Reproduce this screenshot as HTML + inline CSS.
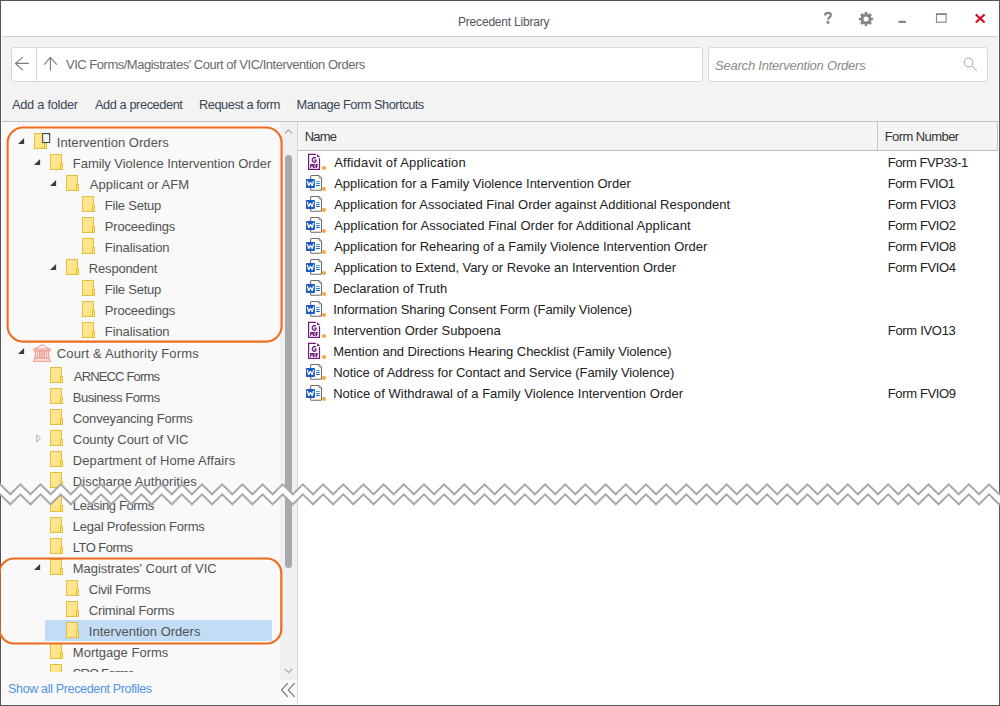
<!DOCTYPE html>
<html><head><meta charset="utf-8"><title>Precedent Library</title>
<style>
*{margin:0;padding:0;box-sizing:border-box}
html,body{width:1000px;height:706px;overflow:hidden;background:#f3f3f3;font-family:"Liberation Sans",sans-serif;position:relative}
.a{position:absolute;display:block}
.t{position:absolute;white-space:nowrap;line-height:20px;height:20px}
</style></head><body>

<div class="a" style="left:0;top:0;width:1000px;height:37px;background:#fff;border-bottom:1px solid #cdcdcd"></div>
<svg class="a" style="left:815px;top:5px" width="180" height="25" viewBox="815 5 180 25">
<path d="M825.1 15.4 L825.1 14.6 Q825.6 12.9 828.1 12.9 Q830.9 12.9 830.9 15 Q830.9 16.4 829.5 17.3 Q828 18.3 828 19.8" fill="none" stroke="#828282" stroke-width="2.1"/><rect x="826.6" y="21.1" width="2.8" height="2.7" rx="0.8" fill="#828282"/>
<g transform="translate(866 19)" fill="#858585">
<circle r="5.4"/>
<rect x="-1.25" y="-7.1" width="2.5" height="14.2"/><rect x="-7.1" y="-1.25" width="14.2" height="2.5"/>
<rect x="-1.5" y="-6.9" width="3" height="13.8" transform="rotate(45)"/><rect x="-6.9" y="-1.5" width="13.8" height="3" transform="rotate(45)"/>
<circle r="2.5" fill="#fff"/>
</g>
<rect x="898.5" y="20.8" width="7.5" height="2.1" fill="#808080"/>
<rect x="936.5" y="14" width="9.6" height="8.2" fill="none" stroke="#8a8a8a" stroke-width="1.15"/>
<rect x="936" y="13.4" width="10.6" height="1.6" fill="#858585"/>
<path d="M975.8 14.6 L984.6 22.6 M984.6 14.6 L975.8 22.6" stroke="#d2051e" stroke-width="2" fill="none"/>
</svg>
<div class="a" style="left:11px;top:47px;width:692px;height:35px;background:#fff;border:1px solid #d7d7d7;border-radius:3px"></div>
<div class="a" style="left:36px;top:48px;width:1px;height:33px;background:#d7d7d7"></div>
<svg class="a" style="left:11px;top:47px" width="60" height="35" viewBox="11 47 60 35">
<path d="M15.4 63.4 L28.8 63.4 M22.8 57.2 L15.4 63.4 L22.8 70.2" fill="none" stroke="#7a7a7a" stroke-width="1.1"/>
<path d="M50.4 57.4 L50.4 70.8 M44.2 64.6 L50.4 57.4 L56.8 64.6" fill="none" stroke="#7a7a7a" stroke-width="1.1"/>
</svg>
<div class="a" style="left:708px;top:47px;width:280px;height:35px;background:#fff;border:1px solid #d7d7d7;border-radius:3px"></div>
<svg class="a" style="left:958px;top:52px" width="25" height="25" viewBox="958 52 25 25">
<circle cx="968.6" cy="62.5" r="4.4" fill="none" stroke="#a2a2a2" stroke-width="1"/>
<path d="M971.7 65.7 L976.9 70.9" stroke="#a2a2a2" stroke-width="1"/>
</svg>
<div class="a" style="left:0;top:121px;width:1000px;height:1px;background:#c2c2c2"></div>
<div class="a" style="left:1px;top:122px;width:296px;height:583px;background:#f9f9f9"></div>
<div class="a" style="left:280px;top:122px;width:17px;height:558px;background:#f0f0f0"></div>
<div class="a" style="left:285px;top:155px;width:7px;height:413px;background:#a9a9a9;border-radius:3.5px"></div>
<svg class="a" style="left:280px;top:122px" width="17" height="558" viewBox="280 122 17 558">
<path d="M284.8 133.6 L288.5 129.8 L292.2 133.6" fill="none" stroke="#a2a2a2" stroke-width="1.1"/>
<path d="M284.8 669 L288.5 672.6 L292.2 669" fill="none" stroke="#a2a2a2" stroke-width="1.1"/>
</svg>
<div class="a" style="left:297px;top:122px;width:1px;height:583px;background:#d6d6d6"></div>
<div class="a" style="left:298px;top:122px;width:701px;height:583px;background:#fff"></div>
<div class="a" style="left:298px;top:122px;width:700px;height:29px;background:#f4f4f4;border-bottom:1px solid #bcbcbc;border-right:1px solid #c4c4c4"></div>
<div class="a" style="left:877px;top:122px;width:1px;height:28px;background:#c8c8c8"></div>
<svg width="0" height="0" style="position:absolute"><defs><linearGradient id="fg" x1="0" y1="0" x2="1" y2="1"><stop offset="0" stop-color="#fee79a"/><stop offset="1" stop-color="#fde27e"/></linearGradient></defs></svg>
<div class="a" style="left:1px;top:122px;width:279px;height:550px;overflow:hidden">
<div class="a" style="left:-1px;top:-122px;width:1000px;height:800px">
<div class="a" style="left:45px;top:620px;width:227px;height:21px;background:#c3dcf5"></div>
<svg class="a" style="left:34px;top:133px" width="14" height="17" viewBox="0 0 14 17"><rect x="0.5" y="0.5" width="11" height="15" fill="url(#fg)" stroke="#e5bf3c"/><rect x="10.5" y="9.5" width="2" height="6" fill="#fde58a" stroke="#e5bf3c"/></svg>
<svg class="a" style="left:42px;top:133px" width="9" height="11" viewBox="0 0 9 11"><rect x="0.65" y="0.55" width="7" height="9" fill="#f6f6f6" stroke="#454545" stroke-width="1.05"/><path d="M5.4 0.1 L8.1 0.1 L8.1 2.8 Z" fill="#454545"/></svg>
<svg class="a" style="left:18px;top:138px" width="7" height="7" viewBox="0 0 7 7"><path d="M0 6 L6.1 0 L6.1 6 Z" fill="#3c3c3c"/></svg>
<div class="t" style="left:56.80px;top:133px;font-size:13px;color:#525252;letter-spacing:0.039px;">Intervention Orders</div>
<svg class="a" style="left:50px;top:154px" width="14" height="17" viewBox="0 0 14 17"><rect x="0.5" y="0.5" width="11" height="15" fill="url(#fg)" stroke="#e5bf3c"/><rect x="10.5" y="9.5" width="2" height="6" fill="#fde58a" stroke="#e5bf3c"/></svg>
<svg class="a" style="left:34px;top:159px" width="7" height="7" viewBox="0 0 7 7"><path d="M0 6 L6.1 0 L6.1 6 Z" fill="#3c3c3c"/></svg>
<div class="t" style="left:72.80px;top:154px;font-size:13px;color:#525252;letter-spacing:-0.045px;">Family Violence Intervention Order</div>
<svg class="a" style="left:66px;top:175px" width="14" height="17" viewBox="0 0 14 17"><rect x="0.5" y="0.5" width="11" height="15" fill="url(#fg)" stroke="#e5bf3c"/><rect x="10.5" y="9.5" width="2" height="6" fill="#fde58a" stroke="#e5bf3c"/></svg>
<svg class="a" style="left:50px;top:180px" width="7" height="7" viewBox="0 0 7 7"><path d="M0 6 L6.1 0 L6.1 6 Z" fill="#3c3c3c"/></svg>
<div class="t" style="left:89.80px;top:175px;font-size:13px;color:#525252;letter-spacing:0.013px;">Applicant or AFM</div>
<svg class="a" style="left:82px;top:196px" width="14" height="17" viewBox="0 0 14 17"><rect x="0.5" y="0.5" width="11" height="15" fill="url(#fg)" stroke="#e5bf3c"/><rect x="10.5" y="9.5" width="2" height="6" fill="#fde58a" stroke="#e5bf3c"/></svg>
<div class="t" style="left:104.80px;top:196px;font-size:13px;color:#525252;letter-spacing:-0.233px;">File Setup</div>
<svg class="a" style="left:82px;top:217px" width="14" height="17" viewBox="0 0 14 17"><rect x="0.5" y="0.5" width="11" height="15" fill="url(#fg)" stroke="#e5bf3c"/><rect x="10.5" y="9.5" width="2" height="6" fill="#fde58a" stroke="#e5bf3c"/></svg>
<div class="t" style="left:104.80px;top:217px;font-size:13px;color:#525252;letter-spacing:-0.180px;">Proceedings</div>
<svg class="a" style="left:82px;top:238px" width="14" height="17" viewBox="0 0 14 17"><rect x="0.5" y="0.5" width="11" height="15" fill="url(#fg)" stroke="#e5bf3c"/><rect x="10.5" y="9.5" width="2" height="6" fill="#fde58a" stroke="#e5bf3c"/></svg>
<div class="t" style="left:104.80px;top:238px;font-size:13px;color:#525252;letter-spacing:-0.091px;">Finalisation</div>
<svg class="a" style="left:66px;top:259px" width="14" height="17" viewBox="0 0 14 17"><rect x="0.5" y="0.5" width="11" height="15" fill="url(#fg)" stroke="#e5bf3c"/><rect x="10.5" y="9.5" width="2" height="6" fill="#fde58a" stroke="#e5bf3c"/></svg>
<svg class="a" style="left:50px;top:264px" width="7" height="7" viewBox="0 0 7 7"><path d="M0 6 L6.1 0 L6.1 6 Z" fill="#3c3c3c"/></svg>
<div class="t" style="left:88.80px;top:259px;font-size:13px;color:#525252;letter-spacing:-0.167px;">Respondent</div>
<svg class="a" style="left:82px;top:280px" width="14" height="17" viewBox="0 0 14 17"><rect x="0.5" y="0.5" width="11" height="15" fill="url(#fg)" stroke="#e5bf3c"/><rect x="10.5" y="9.5" width="2" height="6" fill="#fde58a" stroke="#e5bf3c"/></svg>
<div class="t" style="left:104.80px;top:280px;font-size:13px;color:#525252;letter-spacing:-0.233px;">File Setup</div>
<svg class="a" style="left:82px;top:301px" width="14" height="17" viewBox="0 0 14 17"><rect x="0.5" y="0.5" width="11" height="15" fill="url(#fg)" stroke="#e5bf3c"/><rect x="10.5" y="9.5" width="2" height="6" fill="#fde58a" stroke="#e5bf3c"/></svg>
<div class="t" style="left:104.80px;top:301px;font-size:13px;color:#525252;letter-spacing:-0.180px;">Proceedings</div>
<svg class="a" style="left:82px;top:322px" width="14" height="17" viewBox="0 0 14 17"><rect x="0.5" y="0.5" width="11" height="15" fill="url(#fg)" stroke="#e5bf3c"/><rect x="10.5" y="9.5" width="2" height="6" fill="#fde58a" stroke="#e5bf3c"/></svg>
<div class="t" style="left:104.80px;top:322px;font-size:13px;color:#525252;letter-spacing:-0.091px;">Finalisation</div>
<svg class="a" style="left:33px;top:344px" width="19" height="19" viewBox="0 0 19 19">
<g fill="#f9ddd8" stroke="#f0978a" stroke-width="1">
<path d="M0.9 5.6 L9 0.6 L17.1 5.6" fill="none"/>
<rect x="0.9" y="4.9" width="16.2" height="2"/>
<rect x="2.3" y="6.9" width="2.4" height="7.2"/>
<rect x="6.6" y="6.9" width="4.8" height="7.2" fill="#f4b8ae"/>
<rect x="13.3" y="6.9" width="2.4" height="7.2"/>
<path d="M1.6 14.2 L16.4 14.2 L17.5 17.4 L0.5 17.4 Z"/>
</g>
</svg>
<svg class="a" style="left:18px;top:348px" width="7" height="7" viewBox="0 0 7 7"><path d="M0 6 L6.1 0 L6.1 6 Z" fill="#3c3c3c"/></svg>
<div class="t" style="left:56.80px;top:344px;font-size:13px;color:#525252;letter-spacing:0.145px;">Court &amp; Authority Forms</div>
<svg class="a" style="left:50px;top:367px" width="14" height="17" viewBox="0 0 14 17"><rect x="0.5" y="0.5" width="11" height="15" fill="url(#fg)" stroke="#e5bf3c"/><rect x="10.5" y="9.5" width="2" height="6" fill="#fde58a" stroke="#e5bf3c"/></svg>
<div class="t" style="left:73.80px;top:367px;font-size:13px;color:#525252;letter-spacing:-0.836px;">ARNECC Forms</div>
<svg class="a" style="left:50px;top:388px" width="14" height="17" viewBox="0 0 14 17"><rect x="0.5" y="0.5" width="11" height="15" fill="url(#fg)" stroke="#e5bf3c"/><rect x="10.5" y="9.5" width="2" height="6" fill="#fde58a" stroke="#e5bf3c"/></svg>
<div class="t" style="left:72.80px;top:388px;font-size:13px;color:#525252;letter-spacing:-0.446px;">Business Forms</div>
<svg class="a" style="left:50px;top:409px" width="14" height="17" viewBox="0 0 14 17"><rect x="0.5" y="0.5" width="11" height="15" fill="url(#fg)" stroke="#e5bf3c"/><rect x="10.5" y="9.5" width="2" height="6" fill="#fde58a" stroke="#e5bf3c"/></svg>
<div class="t" style="left:72.80px;top:409px;font-size:13px;color:#525252;letter-spacing:-0.165px;">Conveyancing Forms</div>
<svg class="a" style="left:50px;top:430px" width="14" height="17" viewBox="0 0 14 17"><rect x="0.5" y="0.5" width="11" height="15" fill="url(#fg)" stroke="#e5bf3c"/><rect x="10.5" y="9.5" width="2" height="6" fill="#fde58a" stroke="#e5bf3c"/></svg>
<svg class="a" style="left:36px;top:434px" width="7" height="9" viewBox="0 0 7 9"><path d="M0.8 0.8 L4.6 4.3 L0.8 7.7 Z" fill="none" stroke="#ababab" stroke-width="1"/></svg>
<div class="t" style="left:72.80px;top:430px;font-size:13px;color:#525252;letter-spacing:-0.044px;">County Court of VIC</div>
<svg class="a" style="left:50px;top:451px" width="14" height="17" viewBox="0 0 14 17"><rect x="0.5" y="0.5" width="11" height="15" fill="url(#fg)" stroke="#e5bf3c"/><rect x="10.5" y="9.5" width="2" height="6" fill="#fde58a" stroke="#e5bf3c"/></svg>
<div class="t" style="left:72.80px;top:451px;font-size:13px;color:#525252;letter-spacing:0.088px;">Department of Home Affairs</div>
<svg class="a" style="left:50px;top:472px" width="14" height="17" viewBox="0 0 14 17"><rect x="0.5" y="0.5" width="11" height="15" fill="url(#fg)" stroke="#e5bf3c"/><rect x="10.5" y="9.5" width="2" height="6" fill="#fde58a" stroke="#e5bf3c"/></svg>
<div class="t" style="left:72.80px;top:472px;font-size:13px;color:#525252;letter-spacing:0.055px;">Discharge Authorities</div>
<svg class="a" style="left:50px;top:496px" width="14" height="17" viewBox="0 0 14 17"><rect x="0.5" y="0.5" width="11" height="15" fill="url(#fg)" stroke="#e5bf3c"/><rect x="10.5" y="9.5" width="2" height="6" fill="#fde58a" stroke="#e5bf3c"/></svg>
<div class="t" style="left:72.80px;top:496px;font-size:13px;color:#525252;letter-spacing:-0.375px;">Leasing Forms</div>
<svg class="a" style="left:50px;top:517px" width="14" height="17" viewBox="0 0 14 17"><rect x="0.5" y="0.5" width="11" height="15" fill="url(#fg)" stroke="#e5bf3c"/><rect x="10.5" y="9.5" width="2" height="6" fill="#fde58a" stroke="#e5bf3c"/></svg>
<div class="t" style="left:72.80px;top:517px;font-size:13px;color:#525252;letter-spacing:-0.248px;">Legal Profession Forms</div>
<svg class="a" style="left:50px;top:538px" width="14" height="17" viewBox="0 0 14 17"><rect x="0.5" y="0.5" width="11" height="15" fill="url(#fg)" stroke="#e5bf3c"/><rect x="10.5" y="9.5" width="2" height="6" fill="#fde58a" stroke="#e5bf3c"/></svg>
<div class="t" style="left:72.80px;top:538px;font-size:13px;color:#525252;letter-spacing:-0.537px;">LTO Forms</div>
<svg class="a" style="left:50px;top:559px" width="14" height="17" viewBox="0 0 14 17"><rect x="0.5" y="0.5" width="11" height="15" fill="url(#fg)" stroke="#e5bf3c"/><rect x="10.5" y="9.5" width="2" height="6" fill="#fde58a" stroke="#e5bf3c"/></svg>
<svg class="a" style="left:34px;top:564px" width="7" height="7" viewBox="0 0 7 7"><path d="M0 6 L6.1 0 L6.1 6 Z" fill="#3c3c3c"/></svg>
<div class="t" style="left:72.80px;top:559px;font-size:13px;color:#525252;letter-spacing:-0.042px;">Magistrates&#x27; Court of VIC</div>
<svg class="a" style="left:66px;top:580px" width="14" height="17" viewBox="0 0 14 17"><rect x="0.5" y="0.5" width="11" height="15" fill="url(#fg)" stroke="#e5bf3c"/><rect x="10.5" y="9.5" width="2" height="6" fill="#fde58a" stroke="#e5bf3c"/></svg>
<div class="t" style="left:88.80px;top:580px;font-size:13px;color:#525252;letter-spacing:-0.300px;">Civil Forms</div>
<svg class="a" style="left:66px;top:601px" width="14" height="17" viewBox="0 0 14 17"><rect x="0.5" y="0.5" width="11" height="15" fill="url(#fg)" stroke="#e5bf3c"/><rect x="10.5" y="9.5" width="2" height="6" fill="#fde58a" stroke="#e5bf3c"/></svg>
<div class="t" style="left:88.80px;top:601px;font-size:13px;color:#525252;letter-spacing:-0.177px;">Criminal Forms</div>
<svg class="a" style="left:66px;top:622px" width="14" height="17" viewBox="0 0 14 17"><rect x="0.5" y="0.5" width="11" height="15" fill="url(#fg)" stroke="#e5bf3c"/><rect x="10.5" y="9.5" width="2" height="6" fill="#fde58a" stroke="#e5bf3c"/></svg>
<div class="t" style="left:88.80px;top:622px;font-size:13px;color:#525252;letter-spacing:0.022px;">Intervention Orders</div>
<svg class="a" style="left:50px;top:643px" width="14" height="17" viewBox="0 0 14 17"><rect x="0.5" y="0.5" width="11" height="15" fill="url(#fg)" stroke="#e5bf3c"/><rect x="10.5" y="9.5" width="2" height="6" fill="#fde58a" stroke="#e5bf3c"/></svg>
<div class="t" style="left:72.80px;top:643px;font-size:13px;color:#525252;letter-spacing:0.015px;">Mortgage Forms</div>
<svg class="a" style="left:50px;top:664px" width="14" height="17" viewBox="0 0 14 17"><rect x="0.5" y="0.5" width="11" height="15" fill="url(#fg)" stroke="#e5bf3c"/><rect x="10.5" y="9.5" width="2" height="6" fill="#fde58a" stroke="#e5bf3c"/></svg>
<div class="t" style="left:72.80px;top:664px;font-size:13px;color:#525252;letter-spacing:-0.875px;">SRO Forms</div>
</div></div>
<svg class="a" style="left:306px;top:153px" width="22" height="19" viewBox="0 0 22 19">
<path d="M9.9 1.3 L2.6 1.3 L2.6 16.4 L13.5 16.4 L13.5 5" fill="none" stroke="#6b1b7d" stroke-width="1.2"/>
<path d="M11.1 1 L11.1 3.9 L14.1 3.9 Z" fill="#6b1b7d"/>
<path d="M9.9 5.1 A2.3 2.3 0 1 0 9.9 8.8 L9.9 7.2 L8.3 7.2" fill="none" stroke="#6b1b7d" stroke-width="1.3"/>
<path d="M4.6 15 L4.6 11.5 L6.3 11.5 L6.3 13 L4.6 13 M7.4 11.5 L8.1 11.5 Q9.2 11.5 9.2 13.1 Q9.2 14.5 8.1 14.5 L7.4 14.5 Z M10.4 15 L10.4 11.5 L12 11.5 M10.4 13.1 L11.7 13.1" fill="none" stroke="#6b1b7d" stroke-width="1.05"/>
<circle cx="18" cy="14.9" r="2" fill="#f7a53a"/>
</svg>
<svg class="a" style="left:306px;top:174px" width="22" height="19" viewBox="0 0 22 19">
<path d="M4.6 2.6 Q4.6 1.5 5.6 1.5 L12.7 1.5 L15.5 4.3 L15.5 15.3 Q15.5 16.3 14.5 16.3 L5.6 16.3 Q4.6 16.3 4.6 15.3 Z" fill="#fff" stroke="#6e6e6e" stroke-width="1.1"/>
<path d="M12.9 2.2 L12.9 3.9 L14.8 3.9" fill="none" stroke="#9a9a9a" stroke-width="0.8"/>
<rect x="0" y="5" width="8.9" height="8.9" rx="0.6" fill="#1d5cc5"/>
<path d="M1.3 6.9 L2.7 11.7 L4.45 8.3 L6.2 11.7 L7.6 6.9" fill="none" stroke="#fff" stroke-width="1.25" stroke-linejoin="bevel"/>
<rect x="10" y="6.9" width="3.9" height="1.05" rx="0.5" fill="#3aa0ee"/><rect x="10" y="9" width="3.9" height="1.05" rx="0.5" fill="#1b78d6"/><rect x="10" y="11" width="3.9" height="1.05" rx="0.5" fill="#1456bf"/>
<circle cx="18" cy="14.9" r="2" fill="#f7a53a"/>
</svg>
<svg class="a" style="left:306px;top:195px" width="22" height="19" viewBox="0 0 22 19">
<path d="M4.6 2.6 Q4.6 1.5 5.6 1.5 L12.7 1.5 L15.5 4.3 L15.5 15.3 Q15.5 16.3 14.5 16.3 L5.6 16.3 Q4.6 16.3 4.6 15.3 Z" fill="#fff" stroke="#6e6e6e" stroke-width="1.1"/>
<path d="M12.9 2.2 L12.9 3.9 L14.8 3.9" fill="none" stroke="#9a9a9a" stroke-width="0.8"/>
<rect x="0" y="5" width="8.9" height="8.9" rx="0.6" fill="#1d5cc5"/>
<path d="M1.3 6.9 L2.7 11.7 L4.45 8.3 L6.2 11.7 L7.6 6.9" fill="none" stroke="#fff" stroke-width="1.25" stroke-linejoin="bevel"/>
<rect x="10" y="6.9" width="3.9" height="1.05" rx="0.5" fill="#3aa0ee"/><rect x="10" y="9" width="3.9" height="1.05" rx="0.5" fill="#1b78d6"/><rect x="10" y="11" width="3.9" height="1.05" rx="0.5" fill="#1456bf"/>
<circle cx="18" cy="14.9" r="2" fill="#f7a53a"/>
</svg>
<svg class="a" style="left:306px;top:216px" width="22" height="19" viewBox="0 0 22 19">
<path d="M4.6 2.6 Q4.6 1.5 5.6 1.5 L12.7 1.5 L15.5 4.3 L15.5 15.3 Q15.5 16.3 14.5 16.3 L5.6 16.3 Q4.6 16.3 4.6 15.3 Z" fill="#fff" stroke="#6e6e6e" stroke-width="1.1"/>
<path d="M12.9 2.2 L12.9 3.9 L14.8 3.9" fill="none" stroke="#9a9a9a" stroke-width="0.8"/>
<rect x="0" y="5" width="8.9" height="8.9" rx="0.6" fill="#1d5cc5"/>
<path d="M1.3 6.9 L2.7 11.7 L4.45 8.3 L6.2 11.7 L7.6 6.9" fill="none" stroke="#fff" stroke-width="1.25" stroke-linejoin="bevel"/>
<rect x="10" y="6.9" width="3.9" height="1.05" rx="0.5" fill="#3aa0ee"/><rect x="10" y="9" width="3.9" height="1.05" rx="0.5" fill="#1b78d6"/><rect x="10" y="11" width="3.9" height="1.05" rx="0.5" fill="#1456bf"/>
<circle cx="18" cy="14.9" r="2" fill="#f7a53a"/>
</svg>
<svg class="a" style="left:306px;top:237px" width="22" height="19" viewBox="0 0 22 19">
<path d="M4.6 2.6 Q4.6 1.5 5.6 1.5 L12.7 1.5 L15.5 4.3 L15.5 15.3 Q15.5 16.3 14.5 16.3 L5.6 16.3 Q4.6 16.3 4.6 15.3 Z" fill="#fff" stroke="#6e6e6e" stroke-width="1.1"/>
<path d="M12.9 2.2 L12.9 3.9 L14.8 3.9" fill="none" stroke="#9a9a9a" stroke-width="0.8"/>
<rect x="0" y="5" width="8.9" height="8.9" rx="0.6" fill="#1d5cc5"/>
<path d="M1.3 6.9 L2.7 11.7 L4.45 8.3 L6.2 11.7 L7.6 6.9" fill="none" stroke="#fff" stroke-width="1.25" stroke-linejoin="bevel"/>
<rect x="10" y="6.9" width="3.9" height="1.05" rx="0.5" fill="#3aa0ee"/><rect x="10" y="9" width="3.9" height="1.05" rx="0.5" fill="#1b78d6"/><rect x="10" y="11" width="3.9" height="1.05" rx="0.5" fill="#1456bf"/>
<circle cx="18" cy="14.9" r="2" fill="#f7a53a"/>
</svg>
<svg class="a" style="left:306px;top:258px" width="22" height="19" viewBox="0 0 22 19">
<path d="M4.6 2.6 Q4.6 1.5 5.6 1.5 L12.7 1.5 L15.5 4.3 L15.5 15.3 Q15.5 16.3 14.5 16.3 L5.6 16.3 Q4.6 16.3 4.6 15.3 Z" fill="#fff" stroke="#6e6e6e" stroke-width="1.1"/>
<path d="M12.9 2.2 L12.9 3.9 L14.8 3.9" fill="none" stroke="#9a9a9a" stroke-width="0.8"/>
<rect x="0" y="5" width="8.9" height="8.9" rx="0.6" fill="#1d5cc5"/>
<path d="M1.3 6.9 L2.7 11.7 L4.45 8.3 L6.2 11.7 L7.6 6.9" fill="none" stroke="#fff" stroke-width="1.25" stroke-linejoin="bevel"/>
<rect x="10" y="6.9" width="3.9" height="1.05" rx="0.5" fill="#3aa0ee"/><rect x="10" y="9" width="3.9" height="1.05" rx="0.5" fill="#1b78d6"/><rect x="10" y="11" width="3.9" height="1.05" rx="0.5" fill="#1456bf"/>
<circle cx="18" cy="14.9" r="2" fill="#f7a53a"/>
</svg>
<svg class="a" style="left:306px;top:279px" width="22" height="19" viewBox="0 0 22 19">
<path d="M4.6 2.6 Q4.6 1.5 5.6 1.5 L12.7 1.5 L15.5 4.3 L15.5 15.3 Q15.5 16.3 14.5 16.3 L5.6 16.3 Q4.6 16.3 4.6 15.3 Z" fill="#fff" stroke="#6e6e6e" stroke-width="1.1"/>
<path d="M12.9 2.2 L12.9 3.9 L14.8 3.9" fill="none" stroke="#9a9a9a" stroke-width="0.8"/>
<rect x="0" y="5" width="8.9" height="8.9" rx="0.6" fill="#1d5cc5"/>
<path d="M1.3 6.9 L2.7 11.7 L4.45 8.3 L6.2 11.7 L7.6 6.9" fill="none" stroke="#fff" stroke-width="1.25" stroke-linejoin="bevel"/>
<rect x="10" y="6.9" width="3.9" height="1.05" rx="0.5" fill="#3aa0ee"/><rect x="10" y="9" width="3.9" height="1.05" rx="0.5" fill="#1b78d6"/><rect x="10" y="11" width="3.9" height="1.05" rx="0.5" fill="#1456bf"/>
<circle cx="18" cy="14.9" r="2" fill="#f7a53a"/>
</svg>
<svg class="a" style="left:306px;top:300px" width="22" height="19" viewBox="0 0 22 19">
<path d="M4.6 2.6 Q4.6 1.5 5.6 1.5 L12.7 1.5 L15.5 4.3 L15.5 15.3 Q15.5 16.3 14.5 16.3 L5.6 16.3 Q4.6 16.3 4.6 15.3 Z" fill="#fff" stroke="#6e6e6e" stroke-width="1.1"/>
<path d="M12.9 2.2 L12.9 3.9 L14.8 3.9" fill="none" stroke="#9a9a9a" stroke-width="0.8"/>
<rect x="0" y="5" width="8.9" height="8.9" rx="0.6" fill="#1d5cc5"/>
<path d="M1.3 6.9 L2.7 11.7 L4.45 8.3 L6.2 11.7 L7.6 6.9" fill="none" stroke="#fff" stroke-width="1.25" stroke-linejoin="bevel"/>
<rect x="10" y="6.9" width="3.9" height="1.05" rx="0.5" fill="#3aa0ee"/><rect x="10" y="9" width="3.9" height="1.05" rx="0.5" fill="#1b78d6"/><rect x="10" y="11" width="3.9" height="1.05" rx="0.5" fill="#1456bf"/>
<circle cx="18" cy="14.9" r="2" fill="#f7a53a"/>
</svg>
<svg class="a" style="left:306px;top:321px" width="22" height="19" viewBox="0 0 22 19">
<path d="M9.9 1.3 L2.6 1.3 L2.6 16.4 L13.5 16.4 L13.5 5" fill="none" stroke="#6b1b7d" stroke-width="1.2"/>
<path d="M11.1 1 L11.1 3.9 L14.1 3.9 Z" fill="#6b1b7d"/>
<path d="M9.9 5.1 A2.3 2.3 0 1 0 9.9 8.8 L9.9 7.2 L8.3 7.2" fill="none" stroke="#6b1b7d" stroke-width="1.3"/>
<path d="M4.6 15 L4.6 11.5 L6.3 11.5 L6.3 13 L4.6 13 M7.4 11.5 L8.1 11.5 Q9.2 11.5 9.2 13.1 Q9.2 14.5 8.1 14.5 L7.4 14.5 Z M10.4 15 L10.4 11.5 L12 11.5 M10.4 13.1 L11.7 13.1" fill="none" stroke="#6b1b7d" stroke-width="1.05"/>
<circle cx="18" cy="14.9" r="2" fill="#f7a53a"/>
</svg>
<svg class="a" style="left:306px;top:342px" width="22" height="19" viewBox="0 0 22 19">
<path d="M9.9 1.3 L2.6 1.3 L2.6 16.4 L13.5 16.4 L13.5 5" fill="none" stroke="#6b1b7d" stroke-width="1.2"/>
<path d="M11.1 1 L11.1 3.9 L14.1 3.9 Z" fill="#6b1b7d"/>
<path d="M9.9 5.1 A2.3 2.3 0 1 0 9.9 8.8 L9.9 7.2 L8.3 7.2" fill="none" stroke="#6b1b7d" stroke-width="1.3"/>
<path d="M4.6 15 L4.6 11.5 L6.3 11.5 L6.3 13 L4.6 13 M7.4 11.5 L8.1 11.5 Q9.2 11.5 9.2 13.1 Q9.2 14.5 8.1 14.5 L7.4 14.5 Z M10.4 15 L10.4 11.5 L12 11.5 M10.4 13.1 L11.7 13.1" fill="none" stroke="#6b1b7d" stroke-width="1.05"/>
<circle cx="18" cy="14.9" r="2" fill="#f7a53a"/>
</svg>
<svg class="a" style="left:306px;top:363px" width="22" height="19" viewBox="0 0 22 19">
<path d="M4.6 2.6 Q4.6 1.5 5.6 1.5 L12.7 1.5 L15.5 4.3 L15.5 15.3 Q15.5 16.3 14.5 16.3 L5.6 16.3 Q4.6 16.3 4.6 15.3 Z" fill="#fff" stroke="#6e6e6e" stroke-width="1.1"/>
<path d="M12.9 2.2 L12.9 3.9 L14.8 3.9" fill="none" stroke="#9a9a9a" stroke-width="0.8"/>
<rect x="0" y="5" width="8.9" height="8.9" rx="0.6" fill="#1d5cc5"/>
<path d="M1.3 6.9 L2.7 11.7 L4.45 8.3 L6.2 11.7 L7.6 6.9" fill="none" stroke="#fff" stroke-width="1.25" stroke-linejoin="bevel"/>
<rect x="10" y="6.9" width="3.9" height="1.05" rx="0.5" fill="#3aa0ee"/><rect x="10" y="9" width="3.9" height="1.05" rx="0.5" fill="#1b78d6"/><rect x="10" y="11" width="3.9" height="1.05" rx="0.5" fill="#1456bf"/>
<circle cx="18" cy="14.9" r="2" fill="#f7a53a"/>
</svg>
<svg class="a" style="left:306px;top:384px" width="22" height="19" viewBox="0 0 22 19">
<path d="M4.6 2.6 Q4.6 1.5 5.6 1.5 L12.7 1.5 L15.5 4.3 L15.5 15.3 Q15.5 16.3 14.5 16.3 L5.6 16.3 Q4.6 16.3 4.6 15.3 Z" fill="#fff" stroke="#6e6e6e" stroke-width="1.1"/>
<path d="M12.9 2.2 L12.9 3.9 L14.8 3.9" fill="none" stroke="#9a9a9a" stroke-width="0.8"/>
<rect x="0" y="5" width="8.9" height="8.9" rx="0.6" fill="#1d5cc5"/>
<path d="M1.3 6.9 L2.7 11.7 L4.45 8.3 L6.2 11.7 L7.6 6.9" fill="none" stroke="#fff" stroke-width="1.25" stroke-linejoin="bevel"/>
<rect x="10" y="6.9" width="3.9" height="1.05" rx="0.5" fill="#3aa0ee"/><rect x="10" y="9" width="3.9" height="1.05" rx="0.5" fill="#1b78d6"/><rect x="10" y="11" width="3.9" height="1.05" rx="0.5" fill="#1456bf"/>
<circle cx="18" cy="14.9" r="2" fill="#f7a53a"/>
</svg>
<div class="t" style="left:458.00px;top:12px;font-size:12px;color:#555555;letter-spacing:-0.194px;">Precedent Library</div>
<div class="t" style="left:66.00px;top:55px;font-size:13px;color:#6b6b6b;letter-spacing:-0.485px;">VIC Forms/Magistrates&#x27; Court of VIC/Intervention Orders</div>
<div class="t" style="left:715.00px;top:56px;font-size:13px;color:#8a8a8a;letter-spacing:-0.216px;font-style:italic">Search Intervention Orders</div>
<div class="t" style="left:12.00px;top:95px;font-size:12.8px;color:#394756;letter-spacing:-0.264px;">Add a folder</div>
<div class="t" style="left:95.00px;top:95px;font-size:12.8px;color:#394756;letter-spacing:-0.429px;">Add a precedent</div>
<div class="t" style="left:199.00px;top:95px;font-size:12.8px;color:#394756;letter-spacing:-0.462px;">Request a form</div>
<div class="t" style="left:296.50px;top:95px;font-size:12.8px;color:#394756;letter-spacing:-0.475px;">Manage Form Shortcuts</div>
<div class="t" style="left:304.70px;top:127px;font-size:13px;color:#333333;letter-spacing:-0.800px;">Name</div>
<div class="t" style="left:884.70px;top:127px;font-size:13px;color:#333333;letter-spacing:-0.570px;">Form Number</div>
<div class="t" style="left:334.20px;top:153px;font-size:13px;color:#222222;letter-spacing:0.200px;">Affidavit of Application</div>
<div class="t" style="left:887.80px;top:153px;font-size:13px;color:#222222;letter-spacing:-0.436px;">Form FVP33-1</div>
<div class="t" style="left:334.20px;top:174px;font-size:13px;color:#222222;letter-spacing:-0.004px;">Application for a Family Violence Intervention Order</div>
<div class="t" style="left:887.80px;top:174px;font-size:13px;color:#222222;letter-spacing:-0.467px;">Form FVIO1</div>
<div class="t" style="left:334.20px;top:195px;font-size:13px;color:#222222;letter-spacing:-0.012px;">Application for Associated Final Order against Additional Respondent</div>
<div class="t" style="left:887.80px;top:195px;font-size:13px;color:#222222;letter-spacing:-0.367px;">Form FVIO3</div>
<div class="t" style="left:334.20px;top:216px;font-size:13px;color:#222222;letter-spacing:0.060px;">Application for Associated Final Order for Additional Applicant</div>
<div class="t" style="left:887.80px;top:216px;font-size:13px;color:#222222;letter-spacing:-0.367px;">Form FVIO2</div>
<div class="t" style="left:334.20px;top:237px;font-size:13px;color:#222222;letter-spacing:-0.027px;">Application for Rehearing of a Family Violence Intervention Order</div>
<div class="t" style="left:887.80px;top:237px;font-size:13px;color:#222222;letter-spacing:-0.367px;">Form FVIO8</div>
<div class="t" style="left:334.20px;top:258px;font-size:13px;color:#222222;letter-spacing:-0.045px;">Application to Extend, Vary or Revoke an Intervention Order</div>
<div class="t" style="left:887.80px;top:258px;font-size:13px;color:#222222;letter-spacing:-0.367px;">Form FVIO4</div>
<div class="t" style="left:333.20px;top:279px;font-size:13px;color:#222222;letter-spacing:0.026px;">Declaration of Truth</div>
<div class="t" style="left:333.20px;top:300px;font-size:13px;color:#222222;letter-spacing:-0.088px;">Information Sharing Consent Form (Family Violence)</div>
<div class="t" style="left:333.20px;top:321px;font-size:13px;color:#222222;letter-spacing:-0.004px;">Intervention Order Subpoena</div>
<div class="t" style="left:887.80px;top:321px;font-size:13px;color:#222222;letter-spacing:-0.311px;">Form IVO13</div>
<div class="t" style="left:333.20px;top:342px;font-size:13px;color:#222222;letter-spacing:-0.067px;">Mention and Directions Hearing Checklist (Family Violence)</div>
<div class="t" style="left:333.20px;top:363px;font-size:13px;color:#222222;letter-spacing:-0.069px;">Notice of Address for Contact and Service (Family Violence)</div>
<div class="t" style="left:333.20px;top:384px;font-size:13px;color:#222222;letter-spacing:0.032px;">Notice of Withdrawal of a Family Violence Intervention Order</div>
<div class="t" style="left:887.80px;top:384px;font-size:13px;color:#222222;letter-spacing:-0.367px;">Form FVIO9</div>
<div class="t" style="left:8.10px;top:679px;font-size:12.5px;color:#4f94e4;letter-spacing:-0.342px;">Show all Precedent Profiles</div>
<svg class="a" style="left:278px;top:680px" width="20" height="20" viewBox="278 680 20 20">
<path d="M287.8 683.2 L281.6 690 L287.8 696.8 M294.6 683.2 L288.4 690 L294.6 696.8" fill="none" stroke="#6a6a6a" stroke-width="1.1"/>
</svg>
<div class="a" style="left:0;top:0;width:1000px;height:706px;border:1px solid #555"></div>
<div class="a" style="left:1px;top:1px;width:998px;height:704px;border:1px solid #fff"></div>
<svg class="a" style="left:0;top:0" width="1000" height="706" viewBox="0 0 1000 706">
<rect x="7.6" y="127.5" width="274" height="214.1" rx="15.5" fill="none" stroke="#f06c1c" stroke-width="2.1"/>
<rect x="-0.5" y="558.5" width="281.8" height="85" rx="14.5" fill="none" stroke="#f06c1c" stroke-width="2.2"/>
</svg>
<svg class="a" style="left:0;top:0" width="1000" height="706" viewBox="0 0 1000 706"><path d="M-19.98 484.4 L-9.89 494.3 L0.20 484.4 L10.29 494.3 L20.38 484.4 L30.47 494.3 L40.56 484.4 L50.65 494.3 L60.74 484.4 L70.83 494.3 L80.92 484.4 L91.01 494.3 L101.10 484.4 L111.19 494.3 L121.28 484.4 L131.37 494.3 L141.46 484.4 L151.55 494.3 L161.64 484.4 L171.73 494.3 L181.82 484.4 L191.91 494.3 L202.00 484.4 L212.09 494.3 L222.18 484.4 L232.27 494.3 L242.36 484.4 L252.45 494.3 L262.54 484.4 L272.63 494.3 L282.72 484.4 L292.81 494.3 L302.90 484.4 L312.99 494.3 L323.08 484.4 L333.17 494.3 L343.26 484.4 L353.35 494.3 L363.44 484.4 L373.53 494.3 L383.62 484.4 L393.71 494.3 L403.80 484.4 L413.89 494.3 L423.98 484.4 L434.07 494.3 L444.16 484.4 L454.25 494.3 L464.34 484.4 L474.43 494.3 L484.52 484.4 L494.61 494.3 L504.70 484.4 L514.79 494.3 L524.88 484.4 L534.97 494.3 L545.06 484.4 L555.15 494.3 L565.24 484.4 L575.33 494.3 L585.42 484.4 L595.51 494.3 L605.60 484.4 L615.69 494.3 L625.78 484.4 L635.87 494.3 L645.96 484.4 L656.05 494.3 L666.14 484.4 L676.23 494.3 L686.32 484.4 L696.41 494.3 L706.50 484.4 L716.59 494.3 L726.68 484.4 L736.77 494.3 L746.86 484.4 L756.95 494.3 L767.04 484.4 L777.13 494.3 L787.22 484.4 L797.31 494.3 L807.40 484.4 L817.49 494.3 L827.58 484.4 L837.67 494.3 L847.76 484.4 L857.85 494.3 L867.94 484.4 L878.03 494.3 L888.12 484.4 L898.21 494.3 L908.30 484.4 L918.39 494.3 L928.48 484.4 L938.57 494.3 L948.66 484.4 L958.75 494.3 L968.84 484.4 L978.93 494.3 L989.02 484.4 L999.11 494.3 L1009.20 484.4 L1019.29 494.3 L1019.29 504.3 L1009.20 494.4 L999.11 504.3 L989.02 494.4 L978.93 504.3 L968.84 494.4 L958.75 504.3 L948.66 494.4 L938.57 504.3 L928.48 494.4 L918.39 504.3 L908.30 494.4 L898.21 504.3 L888.12 494.4 L878.03 504.3 L867.94 494.4 L857.85 504.3 L847.76 494.4 L837.67 504.3 L827.58 494.4 L817.49 504.3 L807.40 494.4 L797.31 504.3 L787.22 494.4 L777.13 504.3 L767.04 494.4 L756.95 504.3 L746.86 494.4 L736.77 504.3 L726.68 494.4 L716.59 504.3 L706.50 494.4 L696.41 504.3 L686.32 494.4 L676.23 504.3 L666.14 494.4 L656.05 504.3 L645.96 494.4 L635.87 504.3 L625.78 494.4 L615.69 504.3 L605.60 494.4 L595.51 504.3 L585.42 494.4 L575.33 504.3 L565.24 494.4 L555.15 504.3 L545.06 494.4 L534.97 504.3 L524.88 494.4 L514.79 504.3 L504.70 494.4 L494.61 504.3 L484.52 494.4 L474.43 504.3 L464.34 494.4 L454.25 504.3 L444.16 494.4 L434.07 504.3 L423.98 494.4 L413.89 504.3 L403.80 494.4 L393.71 504.3 L383.62 494.4 L373.53 504.3 L363.44 494.4 L353.35 504.3 L343.26 494.4 L333.17 504.3 L323.08 494.4 L312.99 504.3 L302.90 494.4 L292.81 504.3 L282.72 494.4 L272.63 504.3 L262.54 494.4 L252.45 504.3 L242.36 494.4 L232.27 504.3 L222.18 494.4 L212.09 504.3 L202.00 494.4 L191.91 504.3 L181.82 494.4 L171.73 504.3 L161.64 494.4 L151.55 504.3 L141.46 494.4 L131.37 504.3 L121.28 494.4 L111.19 504.3 L101.10 494.4 L91.01 504.3 L80.92 494.4 L70.83 504.3 L60.74 494.4 L50.65 504.3 L40.56 494.4 L30.47 504.3 L20.38 494.4 L10.29 504.3 L0.20 494.4 L-9.89 504.3 L-19.98 494.4 Z" fill="#fff"/>
<path d="M-19.98 484.4 L-9.89 494.3 L0.20 484.4 L10.29 494.3 L20.38 484.4 L30.47 494.3 L40.56 484.4 L50.65 494.3 L60.74 484.4 L70.83 494.3 L80.92 484.4 L91.01 494.3 L101.10 484.4 L111.19 494.3 L121.28 484.4 L131.37 494.3 L141.46 484.4 L151.55 494.3 L161.64 484.4 L171.73 494.3 L181.82 484.4 L191.91 494.3 L202.00 484.4 L212.09 494.3 L222.18 484.4 L232.27 494.3 L242.36 484.4 L252.45 494.3 L262.54 484.4 L272.63 494.3 L282.72 484.4 L292.81 494.3 L302.90 484.4 L312.99 494.3 L323.08 484.4 L333.17 494.3 L343.26 484.4 L353.35 494.3 L363.44 484.4 L373.53 494.3 L383.62 484.4 L393.71 494.3 L403.80 484.4 L413.89 494.3 L423.98 484.4 L434.07 494.3 L444.16 484.4 L454.25 494.3 L464.34 484.4 L474.43 494.3 L484.52 484.4 L494.61 494.3 L504.70 484.4 L514.79 494.3 L524.88 484.4 L534.97 494.3 L545.06 484.4 L555.15 494.3 L565.24 484.4 L575.33 494.3 L585.42 484.4 L595.51 494.3 L605.60 484.4 L615.69 494.3 L625.78 484.4 L635.87 494.3 L645.96 484.4 L656.05 494.3 L666.14 484.4 L676.23 494.3 L686.32 484.4 L696.41 494.3 L706.50 484.4 L716.59 494.3 L726.68 484.4 L736.77 494.3 L746.86 484.4 L756.95 494.3 L767.04 484.4 L777.13 494.3 L787.22 484.4 L797.31 494.3 L807.40 484.4 L817.49 494.3 L827.58 484.4 L837.67 494.3 L847.76 484.4 L857.85 494.3 L867.94 484.4 L878.03 494.3 L888.12 484.4 L898.21 494.3 L908.30 484.4 L918.39 494.3 L928.48 484.4 L938.57 494.3 L948.66 484.4 L958.75 494.3 L968.84 484.4 L978.93 494.3 L989.02 484.4 L999.11 494.3 L1009.20 484.4 L1019.29 494.3" fill="none" stroke="#a9a9a9" stroke-width="2"/>
<path d="M-19.98 494.4 L-9.89 504.3 L0.20 494.4 L10.29 504.3 L20.38 494.4 L30.47 504.3 L40.56 494.4 L50.65 504.3 L60.74 494.4 L70.83 504.3 L80.92 494.4 L91.01 504.3 L101.10 494.4 L111.19 504.3 L121.28 494.4 L131.37 504.3 L141.46 494.4 L151.55 504.3 L161.64 494.4 L171.73 504.3 L181.82 494.4 L191.91 504.3 L202.00 494.4 L212.09 504.3 L222.18 494.4 L232.27 504.3 L242.36 494.4 L252.45 504.3 L262.54 494.4 L272.63 504.3 L282.72 494.4 L292.81 504.3 L302.90 494.4 L312.99 504.3 L323.08 494.4 L333.17 504.3 L343.26 494.4 L353.35 504.3 L363.44 494.4 L373.53 504.3 L383.62 494.4 L393.71 504.3 L403.80 494.4 L413.89 504.3 L423.98 494.4 L434.07 504.3 L444.16 494.4 L454.25 504.3 L464.34 494.4 L474.43 504.3 L484.52 494.4 L494.61 504.3 L504.70 494.4 L514.79 504.3 L524.88 494.4 L534.97 504.3 L545.06 494.4 L555.15 504.3 L565.24 494.4 L575.33 504.3 L585.42 494.4 L595.51 504.3 L605.60 494.4 L615.69 504.3 L625.78 494.4 L635.87 504.3 L645.96 494.4 L656.05 504.3 L666.14 494.4 L676.23 504.3 L686.32 494.4 L696.41 504.3 L706.50 494.4 L716.59 504.3 L726.68 494.4 L736.77 504.3 L746.86 494.4 L756.95 504.3 L767.04 494.4 L777.13 504.3 L787.22 494.4 L797.31 504.3 L807.40 494.4 L817.49 504.3 L827.58 494.4 L837.67 504.3 L847.76 494.4 L857.85 504.3 L867.94 494.4 L878.03 504.3 L888.12 494.4 L898.21 504.3 L908.30 494.4 L918.39 504.3 L928.48 494.4 L938.57 504.3 L948.66 494.4 L958.75 504.3 L968.84 494.4 L978.93 504.3 L989.02 494.4 L999.11 504.3 L1009.20 494.4 L1019.29 504.3" fill="none" stroke="#a9a9a9" stroke-width="2"/>
</svg>
</body></html>
